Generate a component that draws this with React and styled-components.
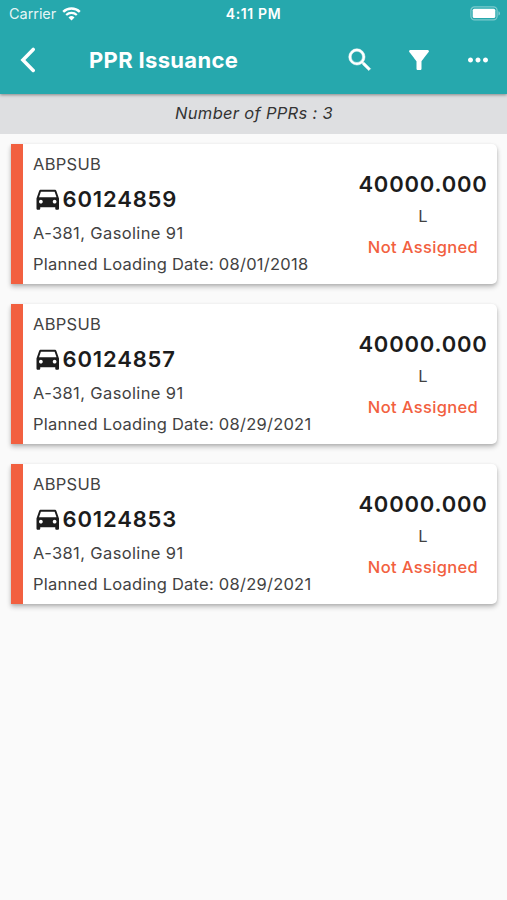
import React from "react";
import styled, { createGlobalStyle } from "styled-components";
import { MdFilterAlt, MdMoreHoriz, MdSearch } from "react-icons/md";

const pprs = [
  {
    id: "60124859",
    customer: "ABPSUB",
    product: "A-381, Gasoline 91",
    date: "08/01/2018",
    quantity: "40000.000",
    unit: "L",
    status: "Not Assigned",
  },
  {
    id: "60124857",
    customer: "ABPSUB",
    product: "A-381, Gasoline 91",
    date: "08/29/2021",
    quantity: "40000.000",
    unit: "L",
    status: "Not Assigned",
  },
  {
    id: "60124853",
    customer: "ABPSUB",
    product: "A-381, Gasoline 91",
    date: "08/29/2021",
    quantity: "40000.000",
    unit: "L",
    status: "Not Assigned",
  },
];

const WifiIcon = () => (
  <svg width="19" height="14" viewBox="0 0 19 14" fill="none">
    <path d="M1.2 4.9a11.8 11.8 0 0 1 16.6 0" stroke="#fff" strokeWidth="2.4" />
    <path d="M4.2 8a7.6 7.6 0 0 1 10.6 0" stroke="#fff" strokeWidth="2.2" />
    <path d="M9.5 13.6 6.5 10.5a4.3 4.3 0 0 1 6 0z" fill="#fff" />
  </svg>
);

const BatteryIcon = () => (
  <svg width="31" height="15" viewBox="0 0 31 15" fill="none">
    <rect
      x="0.9"
      y="0.9"
      width="26.2"
      height="13"
      rx="3.6"
      stroke="#fff"
      strokeOpacity="0.4"
      strokeWidth="1.2"
    />
    <rect x="2.7" y="2.7" width="22.6" height="9.4" rx="1.6" fill="#fff" />
    <path d="M28.5 5.2c1.9.7 1.9 3.7 0 4.4z" fill="#fff" fillOpacity="0.45" />
  </svg>
);

const BackIcon = () => (
  <svg width="16" height="26" viewBox="0 0 16 26" fill="none">
    <path
      d="M13.2 2.4 2.9 12.9 13.2 23.4"
      stroke="currentColor"
      strokeWidth="3.5"
      strokeLinecap="round"
    />
  </svg>
);

const CarIcon = () => (
  <svg width="30" height="30" viewBox="0.2 0.2 24 24" fill="currentColor">
    <path d="M18.92 5.01C18.72 4.42 18.16 4 17.5 4h-11c-.66 0-1.21.42-1.42 1.01L3 11v8c0 .55.45 1 1 1h1c.55 0 1-.45 1-1v-1h12v1c0 .55.45 1 1 1h1c.55 0 1-.45 1-1v-8l-2.08-5.99zM6.5 15c-.83 0-1.5-.67-1.5-1.5S5.67 12 6.5 12s1.5.67 1.5 1.5S7.33 15 6.5 15zm11 0c-.83 0-1.5-.67-1.5-1.5s.67-1.5 1.5-1.5 1.5.67 1.5 1.5-.67 1.5-1.5 1.5zM5 10l1.5-4.5h11L19 10H5z" />
  </svg>
);

const PprCard = ({ ppr }) => (
  <Card>
    <Details>
      <Line>{ppr.customer}</Line>
      <NumberRow>
        <CarIcon />
        <PprNumber>{ppr.id}</PprNumber>
      </NumberRow>
      <ProductLine>{ppr.product}</ProductLine>
      <DateLine>Planned Loading Date: {ppr.date}</DateLine>
    </Details>
    <Summary>
      <Quantity>{ppr.quantity}</Quantity>
      <Unit>{ppr.unit}</Unit>
      <Status>{ppr.status}</Status>
    </Summary>
  </Card>
);

const App = () => {
  return (
    <Screen>
      <GlobalStyle />
      <Header>
        <StatusBar>
          <Carrier>
            Carrier
            <WifiIcon />
          </Carrier>
          <Clock>4:11 PM</Clock>
          <Battery>
            <BatteryIcon />
          </Battery>
        </StatusBar>
        <AppBar>
          <BackButton aria-label="Back">
            <BackIcon />
          </BackButton>
          <Title>PPR Issuance</Title>
          <Actions>
            <IconButton aria-label="Search">
              <SearchIcon size={30} />
            </IconButton>
            <IconButton aria-label="Filter">
              <MdFilterAlt size={30} />
            </IconButton>
            <IconButton aria-label="More">
              <MdMoreHoriz size={30} />
            </IconButton>
          </Actions>
        </AppBar>
      </Header>
      <CountBar>Number of PPRs : {pprs.length}</CountBar>
      <List>
        {pprs.map((ppr) => (
          <PprCard key={ppr.id} ppr={ppr} />
        ))}
      </List>
    </Screen>
  );
};

export default App;

const GlobalStyle = createGlobalStyle`
  * {
    box-sizing: border-box;
  }

  body {
    margin: 0;
    background: #fafafa;
  }

  svg {
    display: block;
    flex-shrink: 0;
  }
`;

const Screen = styled.div`
  min-height: 100vh;
  background: #fafafa;
  color: #424242;
  font-family: "Inter", "Liberation Sans", sans-serif;
`;

const Header = styled.header`
  position: relative;
  height: 94px;
  background: #26a8ad;
  color: #fff;
  box-shadow: 0 1px 3px rgba(0, 0, 0, 0.4);
`;

const StatusBar = styled.div`
  display: grid;
  grid-template-columns: 1fr auto 1fr;
  align-items: center;
  height: 27px;
  padding: 0 6px 0 9px;
`;

const Carrier = styled.div`
  display: flex;
  align-items: center;
  gap: 6px;
  font-size: 14.5px;
  letter-spacing: -0.05px;
  color: rgba(255, 255, 255, 0.9);
`;

const Clock = styled.div`
  margin-right: 3px;
  font-size: 14px;
  font-weight: 600;
  letter-spacing: 0.6px;
`;

const Battery = styled.div`
  display: flex;
  justify-content: flex-end;
`;

const AppBar = styled.div`
  display: flex;
  align-items: center;
  height: 65px;
  padding: 0 14px 0 20px;
`;

const IconButton = styled.button`
  display: flex;
  padding: 0;
  border: none;
  background: none;
  color: inherit;
  cursor: pointer;
`;

const BackButton = styled(IconButton)`
  width: 69px;
`;

const SearchIcon = styled(MdSearch)`
  path:last-child {
    stroke: currentColor;
    stroke-width: 0.4px;
  }

  path[fill="none"] {
    stroke: none;
  }
`;

const Title = styled.h1`
  flex: 1;
  margin: 0;
  font-size: 22px;
  font-weight: 700;
  letter-spacing: 0.33px;
`;

const Actions = styled.div`
  display: flex;
  gap: 29px;
`;

const CountBar = styled.div`
  display: flex;
  align-items: center;
  justify-content: center;
  height: 40px;
  padding: 0 0 2px 1px;
  background: #dedfe1;
  color: #333;
  font-size: 16.5px;
  font-style: italic;
  letter-spacing: 0.3px;
`;

const List = styled.div`
  display: flex;
  flex-direction: column;
  gap: 20px;
  padding: 10px 10px 10px 11px;
`;

const Card = styled.div`
  display: flex;
  height: 140px;
  border-left: 12px solid #f26040;
  border-radius: 0 5px 5px 0;
  background: #fff;
  box-shadow: 0 3px 5px rgba(0, 0, 0, 0.24), 0 1px 3px rgba(0, 0, 0, 0.1);
`;

const Details = styled.div`
  flex: 1;
  padding: 9px 0 0 10px;
`;

const Line = styled.div`
  font-size: 16.5px;
  line-height: 22px;
  letter-spacing: 0.27px;
`;

const ProductLine = styled(Line)`
  letter-spacing: 0.37px;
`;

const DateLine = styled(Line)`
  margin-top: 9px;
  letter-spacing: 0.25px;
`;

const NumberRow = styled.div`
  display: flex;
  align-items: center;
  height: 30px;
  margin: 9px 0 8px -0.5px;
  color: #1c1c1c;

  svg {
    margin-top: 2px;
  }
`;

const PprNumber = styled.div`
  font-size: 22px;
  font-weight: 600;
  letter-spacing: 0.85px;
`;

const Summary = styled.div`
  display: flex;
  flex-direction: column;
  align-items: center;
  width: 148px;
  padding-top: 26px;
`;

const Quantity = styled.div`
  color: #1c1c1c;
  font-size: 22px;
  font-weight: 600;
  line-height: 28px;
  letter-spacing: 0.8px;
`;

const Unit = styled(Line)`
  margin-top: 7px;
`;

const Status = styled(Line)`
  margin-top: 9px;
  color: #f26040;
  font-weight: 500;
  letter-spacing: 0.35px;
`;
